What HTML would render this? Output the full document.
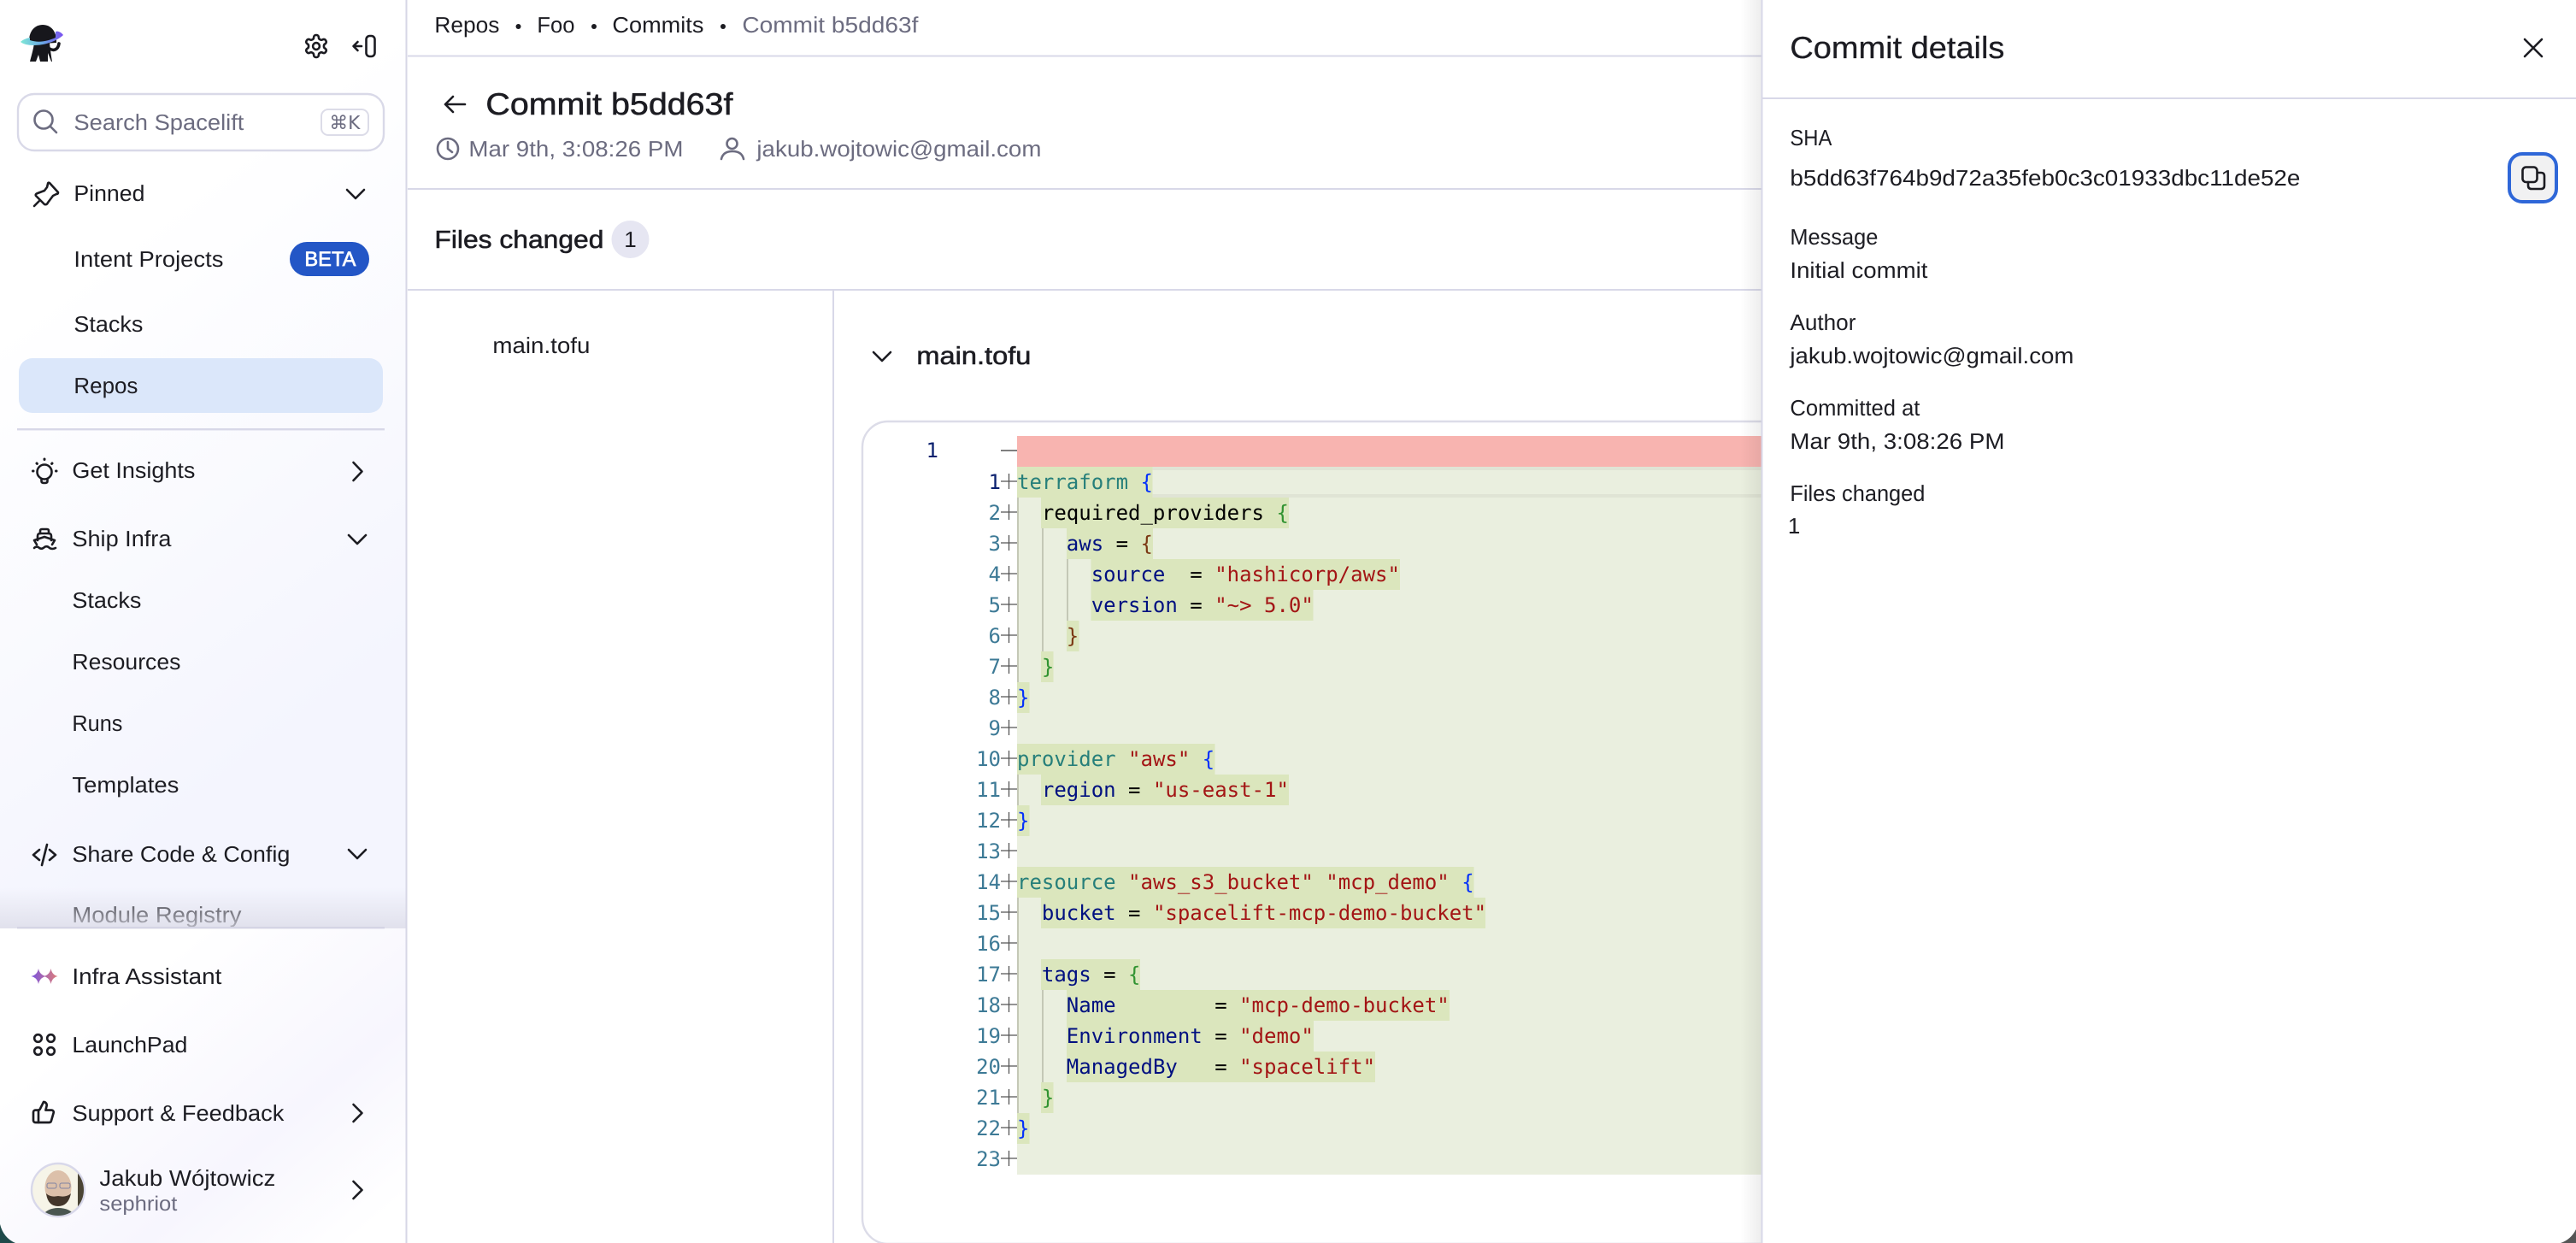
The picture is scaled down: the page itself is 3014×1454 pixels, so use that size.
<!DOCTYPE html>
<html lang="en">
<head>
<meta charset="utf-8">
<title>Commit b5dd63f</title>
<style>
html,body{margin:0;padding:0;background:#fff;width:3014px;height:1454px;overflow:hidden}
svg{display:block;position:absolute;left:0;top:0}
text{font-family:"Liberation Sans",sans-serif;font-size:26px;fill:#1c1c22;text-rendering:geometricPrecision;transform:translateX(-.6px)}
.g{fill:#6c6c80}
.m{stroke:#1c1c22;stroke-width:.55px}
.c{font-family:"DejaVu Sans Mono",monospace;font-size:24px;white-space:pre;transform:none}
.n{font-family:"DejaVu Sans Mono",monospace;font-size:24px;fill:#3d7a96;text-anchor:end;transform:none}
.i{fill:none;stroke:#1c1c22;stroke-width:2.6;stroke-linecap:round;stroke-linejoin:round}
.ig{fill:none;stroke:#6c6c80;stroke-width:2.6;stroke-linecap:round;stroke-linejoin:round}
.tf{fill:#267f7a}.br{fill:#0431fa}.bg{fill:#319331}.bb{fill:#7b3814}.k{fill:#001080}.s{fill:#a31515}.e{fill:#000}
</style>
</head>
<body>
<svg width="3014" height="1454" viewBox="0 0 3014 1454" xmlns="http://www.w3.org/2000/svg">
<defs>
<linearGradient id="sb1" gradientUnits="userSpaceOnUse" x1="120" y1="300" x2="474" y2="760"><stop offset="0" stop-color="#fff"/><stop offset="1" stop-color="#f4f5fe"/></linearGradient>
<linearGradient id="sb2" gradientUnits="userSpaceOnUse" x1="220" y1="1100" x2="474" y2="1400"><stop offset="0" stop-color="#fff"/><stop offset=".6" stop-color="#f7f6fe"/><stop offset="1" stop-color="#fff"/></linearGradient>
<linearGradient id="fade" x1="0" y1="0" x2="0" y2="1"><stop offset="0" stop-color="#dcdce8" stop-opacity="0"/><stop offset="1" stop-color="#dcdce8" stop-opacity=".8"/></linearGradient>
<linearGradient id="ring" gradientUnits="userSpaceOnUse" x1="24" y1="48" x2="74" y2="41"><stop offset="0" stop-color="#7fe8d6"/><stop offset=".5" stop-color="#6aa7e6"/><stop offset="1" stop-color="#7a4ff0"/></linearGradient>
<linearGradient id="spark" gradientUnits="userSpaceOnUse" x1="37" y1="1142" x2="67" y2="1142"><stop offset="0" stop-color="#7c55dc"/><stop offset="1" stop-color="#dc7c7c"/></linearGradient>
<linearGradient id="shadow" x1="0" y1="0" x2="1" y2="0"><stop offset="0" stop-color="#000" stop-opacity="0"/><stop offset="1" stop-color="#000" stop-opacity=".07"/></linearGradient>
<clipPath id="av"><circle cx="68" cy="1392" r="30"/></clipPath>
</defs>

<!-- Sidebar -->
<rect x="0" y="0" width="475" height="1086" fill="url(#sb1)"/>
<rect x="0" y="1086" width="475" height="368" fill="url(#sb2)"/>

<!-- logo -->
<path d="M34 48 C34 36 41 29 50 29 C59 29 66 36 66 48 L66 50 L34 52Z" fill="#17171c"/>
<path d="M40 50 C39 58 37 64 35 72 H42 L45 64 L47 72 H56 L56 62 L60 72 H61 C60 66 59 60 58 50 Z" fill="#17171c"/>
<path d="M58 57 C63 60 68 58 69 51" fill="none" stroke="#17171c" stroke-width="3.6" stroke-linecap="round"/>
<path d="M24 49 C32 56 60 54 74 41 C71 37 67 36 65 37 L65 44 C54 49 44 50 35 47 L35 44 C30 45 26 47 24 49Z" fill="url(#ring)"/>

<!-- top icons -->
<g transform="translate(354.4,38.4) scale(1.3)" fill="none" stroke="#1c1c22" stroke-width="2" stroke-linecap="round" stroke-linejoin="round">
<path d="M12.22 2h-.44a2 2 0 0 0-2 2v.18a2 2 0 0 1-1 1.73l-.43.25a2 2 0 0 1-2 0l-.15-.08a2 2 0 0 0-2.73.73l-.22.38a2 2 0 0 0 .73 2.73l.15.1a2 2 0 0 1 1 1.72v.51a2 2 0 0 1-1 1.74l-.15.09a2 2 0 0 0-.73 2.73l.22.38a2 2 0 0 0 2.73.73l.15-.08a2 2 0 0 1 2 0l.43.25a2 2 0 0 1 1 1.73V20a2 2 0 0 0 2 2h.44a2 2 0 0 0 2-2v-.18a2 2 0 0 1 1-1.73l.43-.25a2 2 0 0 1 2 0l.15.08a2 2 0 0 0 2.73-.73l.22-.39a2 2 0 0 0-.73-2.73l-.15-.08a2 2 0 0 1-1-1.74v-.5a2 2 0 0 1 1-1.74l.15-.09a2 2 0 0 0 .73-2.73l-.22-.38a2 2 0 0 0-2.73-.73l-.15.08a2 2 0 0 1-2 0l-.43-.25a2 2 0 0 1-1-1.73V4a2 2 0 0 0-2-2z"/>
<circle cx="12" cy="12" r="3"/>
</g>
<path class="i" d="M423 54 H414 M418.5 49 L413.5 54 L418.5 59"/>
<rect class="i" x="428.5" y="42" width="10" height="24" rx="4"/>

<!-- search -->
<rect x="21" y="110" width="428" height="66" rx="19" fill="#fff" stroke="#d9d9e8" stroke-width="2.4"/>
<circle class="ig" cx="51" cy="140" r="10.5"/><path class="ig" d="M59 148 L66 155"/>
<text class="g" x="87" y="152" textLength="199" lengthAdjust="spacingAndGlyphs">Search Spacelift</text>
<rect x="376" y="128" width="55" height="30" rx="8" fill="#fff" stroke="#dcdce8" stroke-width="2"/>
<text class="g" x="386" y="151" style="font-size:22px;font-family:'DejaVu Sans',sans-serif" textLength="36" lengthAdjust="spacingAndGlyphs">⌘K</text>

<!-- nav -->
<path class="i" d="M58 214 L68 225 Q68 227 66 227 L62 229 L56 237 Q55 240 52 239 L42 229 Q41 227 44 226 L52 223 L55 219 L56 215 Q56 213 58 214Z M47 234 L40 241"/>
<text x="87" y="235" textLength="83" lengthAdjust="spacingAndGlyphs">Pinned</text>
<path class="i" d="M406 222 L416 232 L426 222"/>
<text x="87" y="312" textLength="175" lengthAdjust="spacingAndGlyphs">Intent Projects</text>
<rect x="339" y="283" width="93" height="40" rx="20" fill="#2356c6"/>
<text x="357" y="311" style="font-size:24px;fill:#fff;stroke:#fff;stroke-width:.7px" textLength="60" lengthAdjust="spacingAndGlyphs">BETA</text>
<text x="87" y="388" textLength="81" lengthAdjust="spacingAndGlyphs">Stacks</text>
<rect x="22" y="419" width="426" height="64" rx="16" fill="#dbe7fa"/>
<text x="87" y="460" textLength="75" lengthAdjust="spacingAndGlyphs">Repos</text>
<rect x="20" y="501" width="430" height="2.4" fill="#d8d8e8"/>

<!-- Get Insights -->
<circle class="i" cx="52" cy="552" r="8.5"/>
<path class="i" d="M48.5 560 V563 Q48.5 565 52 565 Q55.5 565 55.5 563 V560"/>
<path d="M52 537v.5M43 542l.4.4M61 542l-.4.4M38.5 551h.5M65.5 551h.5" fill="none" stroke="#1c1c22" stroke-width="3" stroke-linecap="round"/>
<text x="85" y="559" textLength="144" lengthAdjust="spacingAndGlyphs">Get Insights</text>
<path class="i" d="M413.5 541 L423.5 551.5 L413.5 562"/>

<!-- Ship Infra -->
<path class="i" d="M47 624 V621 Q47 619 49 619 H55 Q57 619 57 621 V624"/>
<path class="i" d="M44 632 V627 Q44 624 47 624 H57 Q60 624 60 627 V632"/>
<path class="i" d="M43 637 L40 632 L52 628 L64 632 L61 637"/>
<path class="i" d="M40 641 Q43 638 46 641 Q49 643 52 640 Q55 638 58 641 Q61 643 65 641"/>
<text x="85" y="639" textLength="116" lengthAdjust="spacingAndGlyphs">Ship Infra</text>
<path class="i" d="M408 626 L418 636 L428 626"/>
<text x="85" y="711" textLength="81" lengthAdjust="spacingAndGlyphs">Stacks</text>
<text x="85" y="783" textLength="127" lengthAdjust="spacingAndGlyphs">Resources</text>
<text x="85" y="855" textLength="59" lengthAdjust="spacingAndGlyphs">Runs</text>
<text x="85" y="927" textLength="125" lengthAdjust="spacingAndGlyphs">Templates</text>

<!-- Share Code -->
<path class="i" d="M46 994 L39 1000 L46 1006 M58 994 L65 1000 L58 1006 M55 988 L49 1012"/>
<text x="85" y="1008" textLength="255" lengthAdjust="spacingAndGlyphs">Share Code &amp; Config</text>
<path class="i" d="M408 994 L418 1004 L428 994"/>
<text x="85" y="1079" textLength="198" lengthAdjust="spacingAndGlyphs">Module Registry</text>
<rect x="0" y="1038" width="475" height="48" fill="url(#fade)"/>
<rect x="20" y="1084" width="430" height="2.4" fill="#d4d4e4"/>

<!-- Bottom nav -->
<path d="M45 1133 Q46.5 1140.5 54 1142 Q46.5 1143.5 45 1151 Q43.5 1143.5 36.5 1142 Q43.5 1140.5 45 1133Z M59.5 1133 Q61 1140.5 67.5 1142 Q61 1143.5 59.5 1151 Q58 1143.5 51 1142 Q58 1140.5 59.5 1133Z" fill="url(#spark)"/>
<text x="85" y="1151" textLength="175" lengthAdjust="spacingAndGlyphs">Infra Assistant</text>
<circle class="i" cx="44.5" cy="1214.5" r="4.3"/><circle class="i" cx="59.5" cy="1214.5" r="4.3"/><circle class="i" cx="44.5" cy="1229.5" r="4.3"/><circle class="i" cx="59.5" cy="1229.5" r="4.3"/>
<text x="85" y="1231" textLength="135" lengthAdjust="spacingAndGlyphs">LaunchPad</text>
<g transform="translate(36.6,1286.6) scale(1.2)" fill="none" stroke="#1c1c22" stroke-width="2.2" stroke-linecap="round" stroke-linejoin="round">
<path d="M7 10v12"/><path d="M15 5.88 14 10h5.83a2 2 0 0 1 1.92 2.56l-2.33 8A2 2 0 0 1 17.5 22H4a2 2 0 0 1-2-2v-8a2 2 0 0 1 2-2h2.76a2 2 0 0 0 1.79-1.11L12 2a3.13 3.13 0 0 1 3 3.88Z"/>
</g>
<text x="85" y="1311" textLength="248" lengthAdjust="spacingAndGlyphs">Support &amp; Feedback</text>
<path class="i" d="M413.5 1292 L423.5 1302 L413.5 1312"/>

<!-- Avatar -->
<circle cx="68" cy="1392" r="31" fill="#f6f4e8" stroke="#d8d8ea" stroke-width="2.4"/>
<g clip-path="url(#av)">
<rect x="91" y="1370" width="9" height="44" fill="#4a4434"/>
<path d="M46 1428 Q52 1413 68 1413 Q86 1413 90 1428Z" fill="#4a5650"/>
<ellipse cx="68" cy="1389" rx="15.5" ry="20" fill="#dcc0aa"/>
<path d="M54 1396 Q56 1411 68 1411 Q80 1411 83 1396 Q78 1401 68 1399 Q59 1401 54 1396Z" fill="#43362b"/>
<rect x="55" y="1384" width="11" height="6" rx="2" fill="none" stroke="#8285a3" stroke-width="1"/>
<rect x="70" y="1384" width="12" height="6" rx="2" fill="none" stroke="#8285a3" stroke-width="1"/>
</g>
<text x="117" y="1387" textLength="206" lengthAdjust="spacingAndGlyphs">Jakub Wójtowicz</text>
<text class="g" x="117" y="1416" style="font-size:24px" textLength="91" lengthAdjust="spacingAndGlyphs">sephriot</text>
<path class="i" d="M413.5 1382 L423.5 1392 L413.5 1402"/>

<!-- Sidebar border -->
<rect x="474.5" y="0" width="2" height="1454" fill="#d6d6e6"/>

<!-- Main header -->
<text x="509" y="38" textLength="76" lengthAdjust="spacingAndGlyphs">Repos</text>
<circle cx="606.5" cy="31" r="3" fill="#1c1c22"/>
<text x="629" y="38" textLength="44" lengthAdjust="spacingAndGlyphs">Foo</text>
<circle cx="695" cy="31" r="3" fill="#1c1c22"/>
<text x="717" y="38" textLength="107" lengthAdjust="spacingAndGlyphs">Commits</text>
<circle cx="846" cy="31" r="3" fill="#1c1c22"/>
<text class="g" x="869" y="38" textLength="206" lengthAdjust="spacingAndGlyphs">Commit b5dd63f</text>
<rect x="477" y="64.5" width="1585" height="2" fill="#d8d8e8"/>

<path class="i" d="M544 122 H521 M530 113 L521 122 L530 131"/>
<text class="m" x="569" y="134" style="font-size:36px" textLength="289" lengthAdjust="spacingAndGlyphs">Commit b5dd63f</text>
<circle class="ig" cx="524" cy="174" r="12"/><path class="ig" d="M524 166 V174 L529 178"/>
<text class="g" x="549" y="183" textLength="251" lengthAdjust="spacingAndGlyphs">Mar 9th, 3:08:26 PM</text>
<circle class="ig" cx="856.5" cy="168" r="6"/><path class="ig" d="M844 186 Q846 177 857 177 Q868 177 870 186"/>
<text class="g" x="886" y="183" textLength="333" lengthAdjust="spacingAndGlyphs">jakub.wojtowic@gmail.com</text>
<rect x="477" y="220" width="1585" height="2" fill="#d8d8e8"/>

<text class="m" x="509" y="290" style="font-size:29px" textLength="198" lengthAdjust="spacingAndGlyphs">Files changed</text>
<circle cx="737.5" cy="280" r="22" fill="#e6e6f2"/>
<text x="738.1" y="289" text-anchor="middle">1</text>
<rect x="477" y="338" width="1585" height="2" fill="#d8d8e8"/>
<rect x="974" y="340" width="2" height="1114" fill="#d8d8e8"/>

<text x="577" y="413" textLength="114" lengthAdjust="spacingAndGlyphs">main.tofu</text>
<path class="i" d="M1022 412 L1032 422 L1042 412"/>
<text class="m" x="1073" y="426" style="font-size:29px" textLength="134" lengthAdjust="spacingAndGlyphs">main.tofu</text>

<!-- Code box -->
<rect x="1009" y="493" width="1400" height="962" rx="30" fill="#fff" stroke="#dcdce8" stroke-width="2.4"/>
<rect x="1190" y="510" width="872" height="36" fill="#f8b4b0"/>
<rect x="1190" y="546" width="872" height="828" fill="#eaefdf"/>
<rect x="1190" y="546" width="872" height="4" fill="#e0e4d5"/>
<rect x="1190" y="578" width="872" height="4" fill="#e0e4d5"/>

<!-- inline highlights -->
<g fill="#dbe6bd">
<rect x="1190" y="546" width="158.5" height="36"/>
<rect x="1218" y="582" width="290" height="36"/>
<rect x="1248" y="618" width="101" height="36"/>
<rect x="1276.5" y="654" width="361.5" height="36"/>
<rect x="1276.5" y="690" width="260" height="36"/>
<rect x="1248" y="726" width="14.5" height="36"/>
<rect x="1218" y="762" width="14.5" height="36"/>
<rect x="1190" y="798" width="14.5" height="36"/>
<rect x="1190" y="870" width="231.5" height="36"/>
<rect x="1218" y="906" width="290" height="36"/>
<rect x="1190" y="942" width="14.5" height="36"/>
<rect x="1190" y="1014" width="534.5" height="36"/>
<rect x="1218" y="1050" width="520" height="36"/>
<rect x="1218" y="1122" width="116" height="36"/>
<rect x="1248" y="1158" width="448" height="36"/>
<rect x="1248" y="1194" width="289" height="36"/>
<rect x="1248" y="1230" width="361" height="36"/>
<rect x="1218" y="1266" width="14.5" height="36"/>
<rect x="1190" y="1302" width="14.5" height="36"/>
</g>

<!-- indent guides -->
<g fill="#c4c8b6">
<rect x="1190" y="582" width="2" height="216"/>
<rect x="1219" y="618" width="2" height="144"/>
<rect x="1248" y="654" width="2" height="72"/>
<rect x="1190" y="906" width="2" height="36"/>
<rect x="1190" y="1050" width="2" height="252"/>
<rect x="1219" y="1158" width="2" height="108"/>
</g>

<!-- gutter -->
<text class="n" x="1098" y="535" style="fill:#0b216f">1</text>
<path d="M1171 527 h19" stroke="#555" stroke-width="1.4" fill="none"/>
<path fill="none" stroke="#555" stroke-width="1.3" d="M1171 563h19M1180.5 554v18M1171 599h19M1180.5 590v18M1171 635h19M1180.5 626v18M1171 671h19M1180.5 662v18M1171 707h19M1180.5 698v18M1171 743h19M1180.5 734v18M1171 779h19M1180.5 770v18M1171 815h19M1180.5 806v18M1171 851h19M1180.5 842v18M1171 887h19M1180.5 878v18M1171 923h19M1180.5 914v18M1171 959h19M1180.5 950v18M1171 995h19M1180.5 986v18M1171 1031h19M1180.5 1022v18M1171 1067h19M1180.5 1058v18M1171 1103h19M1180.5 1094v18M1171 1139h19M1180.5 1130v18M1171 1175h19M1180.5 1166v18M1171 1211h19M1180.5 1202v18M1171 1247h19M1180.5 1238v18M1171 1283h19M1180.5 1274v18M1171 1319h19M1180.5 1310v18M1171 1355h19M1180.5 1346v18"/>
<text class="n" x="1171" y="572" style="fill:#0b216f">1</text>
<text class="n" x="1171" y="608">2</text>
<text class="n" x="1171" y="644">3</text>
<text class="n" x="1171" y="680">4</text>
<text class="n" x="1171" y="716">5</text>
<text class="n" x="1171" y="752">6</text>
<text class="n" x="1171" y="788">7</text>
<text class="n" x="1171" y="824">8</text>
<text class="n" x="1171" y="860">9</text>
<text class="n" x="1171" y="896">10</text>
<text class="n" x="1171" y="932">11</text>
<text class="n" x="1171" y="968">12</text>
<text class="n" x="1171" y="1004">13</text>
<text class="n" x="1171" y="1040">14</text>
<text class="n" x="1171" y="1076">15</text>
<text class="n" x="1171" y="1112">16</text>
<text class="n" x="1171" y="1148">17</text>
<text class="n" x="1171" y="1184">18</text>
<text class="n" x="1171" y="1220">19</text>
<text class="n" x="1171" y="1256">20</text>
<text class="n" x="1171" y="1292">21</text>
<text class="n" x="1171" y="1328">22</text>
<text class="n" x="1171" y="1364">23</text>

<!-- code -->
<text class="c" x="1190" y="572"><tspan class="tf">terraform</tspan><tspan class="e"> </tspan><tspan class="br">{</tspan></text>
<text class="c" x="1218.9" y="608"><tspan class="e">required_providers </tspan><tspan class="bg">{</tspan></text>
<text class="c" x="1247.8" y="644"><tspan class="k">aws</tspan><tspan class="e"> = </tspan><tspan class="bb">{</tspan></text>
<text class="c" x="1276.7" y="680"><tspan class="k">source</tspan><tspan class="e">  = </tspan><tspan class="s">"hashicorp/aws"</tspan></text>
<text class="c" x="1276.7" y="716"><tspan class="k">version</tspan><tspan class="e"> = </tspan><tspan class="s">"~&gt; 5.0"</tspan></text>
<text class="c bb" x="1247.8" y="752">}</text>
<text class="c bg" x="1218.9" y="788">}</text>
<text class="c br" x="1190" y="824">}</text>
<text class="c" x="1190" y="896"><tspan class="tf">provider</tspan><tspan class="e"> </tspan><tspan class="s">"aws"</tspan><tspan class="e"> </tspan><tspan class="br">{</tspan></text>
<text class="c" x="1218.9" y="932"><tspan class="k">region</tspan><tspan class="e"> = </tspan><tspan class="s">"us-east-1"</tspan></text>
<text class="c br" x="1190" y="968">}</text>
<text class="c" x="1190" y="1040"><tspan class="tf">resource</tspan><tspan class="e"> </tspan><tspan class="s">"aws_s3_bucket"</tspan><tspan class="e"> </tspan><tspan class="s">"mcp_demo"</tspan><tspan class="e"> </tspan><tspan class="br">{</tspan></text>
<text class="c" x="1218.9" y="1076"><tspan class="k">bucket</tspan><tspan class="e"> = </tspan><tspan class="s">"spacelift-mcp-demo-bucket"</tspan></text>
<text class="c" x="1218.9" y="1148"><tspan class="k">tags</tspan><tspan class="e"> = </tspan><tspan class="bg">{</tspan></text>
<text class="c" x="1247.8" y="1184"><tspan class="k">Name</tspan><tspan class="e">        = </tspan><tspan class="s">"mcp-demo-bucket"</tspan></text>
<text class="c" x="1247.8" y="1220"><tspan class="k">Environment</tspan><tspan class="e"> = </tspan><tspan class="s">"demo"</tspan></text>
<text class="c" x="1247.8" y="1256"><tspan class="k">ManagedBy</tspan><tspan class="e">   = </tspan><tspan class="s">"spacelift"</tspan></text>
<text class="c bg" x="1218.9" y="1292">}</text>
<text class="c br" x="1190" y="1328">}</text>

<!-- Panel -->
<rect x="2036" y="0" width="25" height="1454" fill="url(#shadow)"/>
<rect x="2061" y="0" width="953" height="1454" fill="#fff"/>
<rect x="2060.5" y="0" width="2" height="1454" fill="#d8d8e8"/>
<text class="m" x="2095" y="68" style="font-size:36px;stroke-width:.3px" textLength="251" lengthAdjust="spacingAndGlyphs">Commit details</text>
<path class="i" d="M2954 46 L2974 66 M2974 46 L2954 66"/>
<rect x="2062" y="114" width="952" height="2" fill="#d8d8e8"/>

<text x="2095" y="170" textLength="49" lengthAdjust="spacingAndGlyphs">SHA</text>
<text x="2095" y="217" textLength="597" lengthAdjust="spacingAndGlyphs">b5dd63f764b9d72a35feb0c3c01933dbc11de52e</text>
<rect x="2936" y="180" width="55" height="56" rx="15" fill="#f1f1f2" stroke="#2f67d8" stroke-width="4"/>
<path class="i" d="M2958 213 V217 Q2958 221 2962 221 H2973 Q2977 221 2977 217 V206 Q2977 202 2973 202 H2969"/>
<rect class="i" x="2951.5" y="195.5" width="17" height="17.5" rx="4"/>
<text x="2095" y="286" textLength="103" lengthAdjust="spacingAndGlyphs">Message</text>
<text x="2095" y="325" textLength="161" lengthAdjust="spacingAndGlyphs">Initial commit</text>
<text x="2095" y="386" textLength="77" lengthAdjust="spacingAndGlyphs">Author</text>
<text x="2095" y="425" textLength="332" lengthAdjust="spacingAndGlyphs">jakub.wojtowic@gmail.com</text>
<text x="2095" y="486" textLength="152" lengthAdjust="spacingAndGlyphs">Committed at</text>
<text x="2095" y="525" textLength="251" lengthAdjust="spacingAndGlyphs">Mar 9th, 3:08:26 PM</text>
<text x="2095" y="586" textLength="158" lengthAdjust="spacingAndGlyphs">Files changed</text>
<text x="2092.5" y="624">1</text>

<!-- window corners -->
<path d="M0 1432 Q4 1448 18 1454 L0 1454Z" fill="#1f4a4a"/>
<path d="M3014 1438 Q3008 1450 2996 1454 L3014 1454Z" fill="#555"/>
</svg>
</body>
</html>
